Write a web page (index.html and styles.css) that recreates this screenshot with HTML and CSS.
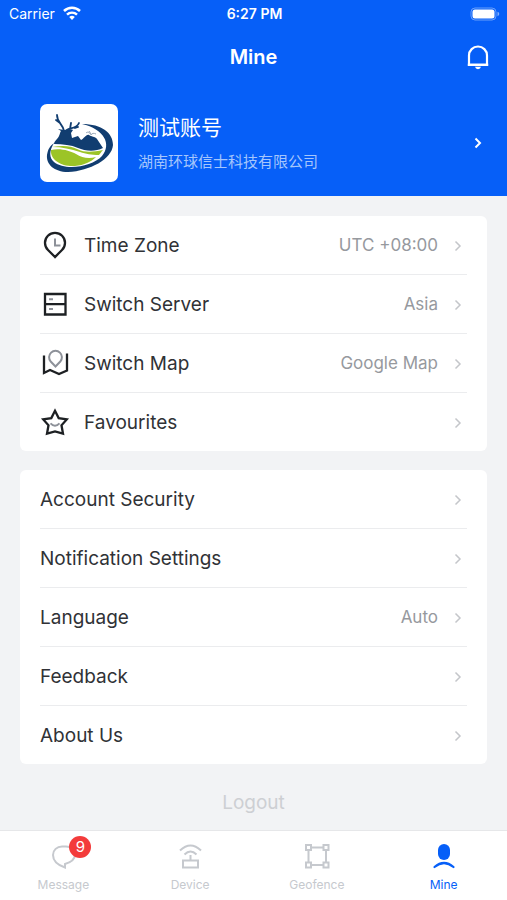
FILE: index.html
```
<!DOCTYPE html>
<html lang="en">
<head>
    <meta charset="UTF-8">
    <meta name="viewport" content="width=device-width, initial-scale=1.0">
    <title>Mine</title>
    <link rel="stylesheet" href="styles.css">
</head>
<body>
    <header class="header">
        <div class="status-bar">
            <div class="carrier">
                <span>Carrier</span>
                <svg width="20" height="15" viewBox="0 0 20 15" fill="none" stroke="#fff" stroke-width="2.6">
                    <path d="M2 5a11.6 11.6 0 0 1 16 0"/>
                    <path d="M5 8.7a7 7 0 0 1 10 0" stroke-width="2.4"/>
                    <path d="M10 14l-2.8-2.9a4 4 0 0 1 5.6 0z" fill="#fff" stroke="none"/>
                </svg>
            </div>
            <span class="time">6:27 PM</span>
            <svg class="battery" width="30" height="14" viewBox="0 0 30 14">
                <rect x="1" y="1" width="25" height="12" rx="4" fill="none" stroke="#fff" stroke-opacity=".4"/>
                <rect x="2.5" y="2.5" width="22" height="9" rx="2.5" fill="#fff"/>
                <path d="M27.5 4.8v4.4q1.8-.6 1.8-2.2t-1.8-2.2z" fill="#fff" fill-opacity=".5"/>
            </svg>
        </div>
        <div class="title-bar">
            <h1>Mine</h1>
            <button class="bell" type="button" aria-label="Notifications">
                <svg width="24" height="26" viewBox="0 0 24 26" fill="none" stroke="#fff" stroke-width="2.2">
                    <path d="M3 20.800V11.500a9 9 0 0 1 18 0v9.300z"/>
                    <path d="M1.800 20.800h20.400"/>
                    <path d="M9 22.800h6q-.6 2.400-3 2.400t-3-2.400z" fill="#fff" stroke="none"/>
                </svg>
            </button>
        </div>
        <a class="profile" href="#profile">
            <span class="avatar">
                <svg width="78" height="78" viewBox="0 0 78 78">
                    <path d="M42 20C62 20 73 29 73 41 72 55 50 67 28 68 14 68 6 60 7 51 8 45 10 42 14 39 9 47 9 54 14 58 25 67 52 63 62 52 72 40 64 25 42 20z" fill="#113d70"/>
                    <path d="M14 40c0-3 4-5 5-8 1-2 1-4 2-5l-3-2 6 1c3 0 7-1 9 0l-2 3 1 5 6-2 3 4c3-1 5-6 8-5 2 2 6 1 8 4l6 9c-8 4-18 3-25 0s-15-4-24-4z" fill="#113d70"/>
                    <path d="M24 27c-1-7-7-8-7-16M20 19l-4-3M26 27c2-4 10-1 13-8M30 25l1-6M35 24l3-1" fill="none" stroke="#113d70" stroke-width="1.8" stroke-linecap="round"/>
                    <path d="M12 43c11-2 19-1 25 2 8 4 16 3 26 1-2 2-3 4-4 5-8 0-13-1-19-3-9-3-18-5-28-5z" fill="#9cc427"/>
                    <path d="M11 46c10-2 19 1 25 4 6 4 13 5 20 3-5 5-12 8-21 9-13 1-25-6-24-16z" fill="#9cc427"/>
                    <path d="M46 29c2-2 4 0 5 2 1-2 3-2 5-1M49 27l2 3" fill="none" stroke="#97a6b7" stroke-width="1"/>
                </svg>
            </span>
            <span class="profile-text">
                <strong>测试账号</strong>
                <small>湖南环球信士科技有限公司</small>
            </span>
            <svg class="profile-arrow" width="8" height="12" viewBox="0 0 8 12" fill="none" stroke="#fff" stroke-width="2">
                <path d="M1.5 1.5L6 6l-4.5 4.5"/>
            </svg>
        </a>
    </header>

    <main>
        <ul class="card">
            <li>
                <a href="#timezone">
                    <svg class="icon" width="30" height="28" viewBox="0 0 30 28" fill="none" stroke="#1d2023" stroke-width="2.3">
                        <path d="M15 26l-7-7a10 10 0 1 1 14 0z"/>
                        <path d="M15 7.500v7h5.500" stroke="#8d9199" stroke-width="2"/>
                    </svg>
                    <span class="label">Time Zone</span>
                    <span class="value">UTC +08:00</span>
                    <svg class="arrow" viewBox="0 0 8 12"><path d="M1.5 1.5L6 6l-4.5 4.5"/></svg>
                </a>
            </li>
            <li>
                <a href="#server">
                    <svg class="icon" width="30" height="28" viewBox="0 0 30 28" fill="none" stroke="#1d2023" stroke-width="2.3">
                        <path d="M5 4h20.500v20.500H5zM5 14.200h20.500"/>
                        <path d="M9 9.200h4M9 19h4" stroke="#8d9199" stroke-width="2"/>
                    </svg>
                    <span class="label">Switch Server</span>
                    <span class="value">Asia</span>
                    <svg class="arrow" viewBox="0 0 8 12"><path d="M1.5 1.5L6 6l-4.5 4.5"/></svg>
                </a>
            </li>
            <li>
                <a href="#map">
                    <svg class="icon" width="30" height="28" viewBox="0 0 30 28" fill="none" stroke="#1d2023" stroke-width="2.3">
                        <path d="M4 6.500V24l6-3 9 4 8-3.500V4.500"/>
                        <path d="M15.500 17.500l-4.800-5a6.400 6.400 0 1 1 9.600 0z" stroke="#8d9199" stroke-width="2"/>
                    </svg>
                    <span class="label">Switch Map</span>
                    <span class="value">Google Map</span>
                    <svg class="arrow" viewBox="0 0 8 12"><path d="M1.5 1.5L6 6l-4.5 4.5"/></svg>
                </a>
            </li>
            <li>
                <a href="#favourites">
                    <svg class="icon" width="30" height="28" viewBox="0 0 30 28" fill="none" stroke="#1d2023" stroke-width="2.3">
                        <path d="M15 2.800l3.700 7.300 8.100 1.300-5.300 5.900 1.500 8.400-8-2.200-8 2.200 1.500-8.400-5.300-5.900 8.100-1.300z"/>
                        <path d="M10.500 15.400q4.500 4.800 9 0" stroke="#8d9199" stroke-width="2"/>
                    </svg>
                    <span class="label">Favourites</span>
                    <svg class="arrow" viewBox="0 0 8 12"><path d="M1.5 1.5L6 6l-4.5 4.5"/></svg>
                </a>
            </li>
        </ul>

        <ul class="card">
            <li>
                <a href="#security">
                    <span class="label">Account Security</span>
                    <svg class="arrow" viewBox="0 0 8 12"><path d="M1.5 1.5L6 6l-4.5 4.5"/></svg>
                </a>
            </li>
            <li>
                <a href="#notifications">
                    <span class="label">Notification Settings</span>
                    <svg class="arrow" viewBox="0 0 8 12"><path d="M1.5 1.5L6 6l-4.5 4.5"/></svg>
                </a>
            </li>
            <li>
                <a href="#language">
                    <span class="label">Language</span>
                    <span class="value">Auto</span>
                    <svg class="arrow" viewBox="0 0 8 12"><path d="M1.5 1.5L6 6l-4.5 4.5"/></svg>
                </a>
            </li>
            <li>
                <a href="#feedback">
                    <span class="label">Feedback</span>
                    <svg class="arrow" viewBox="0 0 8 12"><path d="M1.5 1.5L6 6l-4.5 4.5"/></svg>
                </a>
            </li>
            <li>
                <a href="#about">
                    <span class="label">About Us</span>
                    <svg class="arrow" viewBox="0 0 8 12"><path d="M1.5 1.5L6 6l-4.5 4.5"/></svg>
                </a>
            </li>
        </ul>

        <button class="logout" type="button">Logout</button>
    </main>

    <nav class="tabs">
        <a href="#message">
            <span class="tab-icon">
                <svg width="28" height="28" viewBox="0 0 28 28" fill="none" stroke="#c6c9ce" stroke-width="2">
                    <path d="M13 4.500h4c5 0 9 3 9 8 0 6-5 8-10 9.500v3.500C13 24.500 4 21 4 13c0-5 4-8.500 9-8.500z"/>
                </svg>
                <span class="badge">9</span>
            </span>
            Message
        </a>
        <a href="#device">
            <span class="tab-icon">
                <svg width="28" height="28" viewBox="0 0 28 28" fill="none" stroke="#c6c9ce" stroke-width="2">
                    <path d="M4 8.500q10.500-10 21 0M8.500 12.500q6-6 12 0M14.500 13v6M7 18.500h15v7H7z"/>
                </svg>
            </span>
            Device
        </a>
        <a href="#geofence">
            <span class="tab-icon">
                <svg width="28" height="28" viewBox="0 0 28 28" fill="none" stroke="#c6c9ce" stroke-width="2">
                    <path d="M3 3h5v5H3zM20.500 3h5v5h-5zM3 20.500h5v5H3zM20.500 20.500h5v5h-5zM8 5.500h12.500M8 23h12.500M5.500 8v12.500M23 8v12.500"/>
                </svg>
            </span>
            Geofence
        </a>
        <a class="active" href="#mine">
            <span class="tab-icon">
                <svg width="28" height="28" viewBox="0 0 28 28">
                    <rect x="8" y="2" width="12" height="16" rx="6" fill="#065ff8"/>
                    <path d="M4.500 25q9.500-8 19 0" fill="none" stroke="#065ff8" stroke-width="2.200" stroke-linecap="round"/>
                </svg>
            </span>
            Mine
        </a>
    </nav>
</body>
</html>
```

FILE: styles.css
```
* {
    box-sizing: border-box;
}

body {
    margin: 0;
    min-height: 100vh;
    display: flex;
    flex-direction: column;
    background-color: #f2f3f5;
    color: #303236;
    font-family: Inter, "Noto Sans CJK SC", sans-serif;
}

a {
    color: inherit;
    text-decoration: none;
}

button {
    border: 0;
    padding: 0;
    background: none;
    font-family: inherit;
    cursor: pointer;
}

svg {
    display: block;
    flex-shrink: 0;
}

/* header */
.header {
    background-color: #065ff8;
    color: #fff;
    padding-bottom: 14px;
}

.status-bar {
    display: grid;
    grid-template-columns: 1fr auto 1fr;
    align-items: center;
    height: 27px;
    padding: 0 7px 0 9px;
    font-size: 14px;
}

.carrier {
    display: flex;
    align-items: center;
    gap: 7px;
}

.time {
    font-size: 14px;
    font-weight: 600;
}

.battery {
    justify-self: end;
}

.title-bar {
    display: grid;
    grid-template-columns: 1fr auto 1fr;
    align-items: center;
    height: 60px;
    padding: 0 17px;
}

h1 {
    grid-column: 2;
    margin: 0;
    font-size: 20px;
    font-weight: 600;
}

.bell {
    justify-self: end;
}

.profile {
    display: flex;
    align-items: center;
    padding: 17px 25px 0 40px;
}

.avatar {
    border-radius: 7px;
    background-color: #fff;
}

.profile-text {
    flex: 1;
    display: flex;
    flex-direction: column;
    gap: 10px;
    margin-left: 20px;
}

.profile-text strong {
    font-size: 21px;
    font-weight: 400;
    line-height: 28px;
}

.profile-text small {
    font-size: 15px;
    line-height: 20px;
    color: #a5c6fc;
}

/* settings lists */
.card {
    list-style: none;
    margin: 20px 20px 0;
    padding: 0 20px;
    border-radius: 6px;
    background-color: #fff;
}

.card + .card {
    margin-top: 19px;
}

.card li + li {
    border-top: 1px solid #ebecee;
}

.card a {
    display: flex;
    align-items: center;
    height: 58px;
    font-size: 19px;
}

.icon {
    margin-right: 14px;
}

.label {
    flex: 1;
}

.value {
    font-size: 17px;
    color: #96999e;
}

.arrow {
    width: 8px;
    height: 12px;
    margin: 2px 5px 0 16px;
    fill: none;
    stroke: #c4c6ca;
    stroke-width: 1.5;
}

.logout {
    display: block;
    margin: 24px auto 12px;
    font-size: 19px;
    line-height: 30px;
    color: #cdcfd3;
}

/* bottom tabs */
.tabs {
    display: flex;
    margin-top: auto;
    height: 70px;
    border-top: 1px solid #e6e7e9;
    background-color: #fff;
}

.tabs a {
    flex: 1;
    display: flex;
    flex-direction: column;
    align-items: center;
    gap: 7px;
    padding-top: 11px;
    font-size: 12px;
    line-height: 16px;
    color: #c6c9ce;
}

.tabs .active {
    color: #065ff8;
}

.tab-icon {
    position: relative;
}

.badge {
    position: absolute;
    top: -6px;
    left: 20px;
    width: 22px;
    height: 22px;
    border-radius: 50%;
    background-color: #f33b3b;
    color: #fff;
    font-size: 15px;
    line-height: 22px;
    text-align: center;
}
```
